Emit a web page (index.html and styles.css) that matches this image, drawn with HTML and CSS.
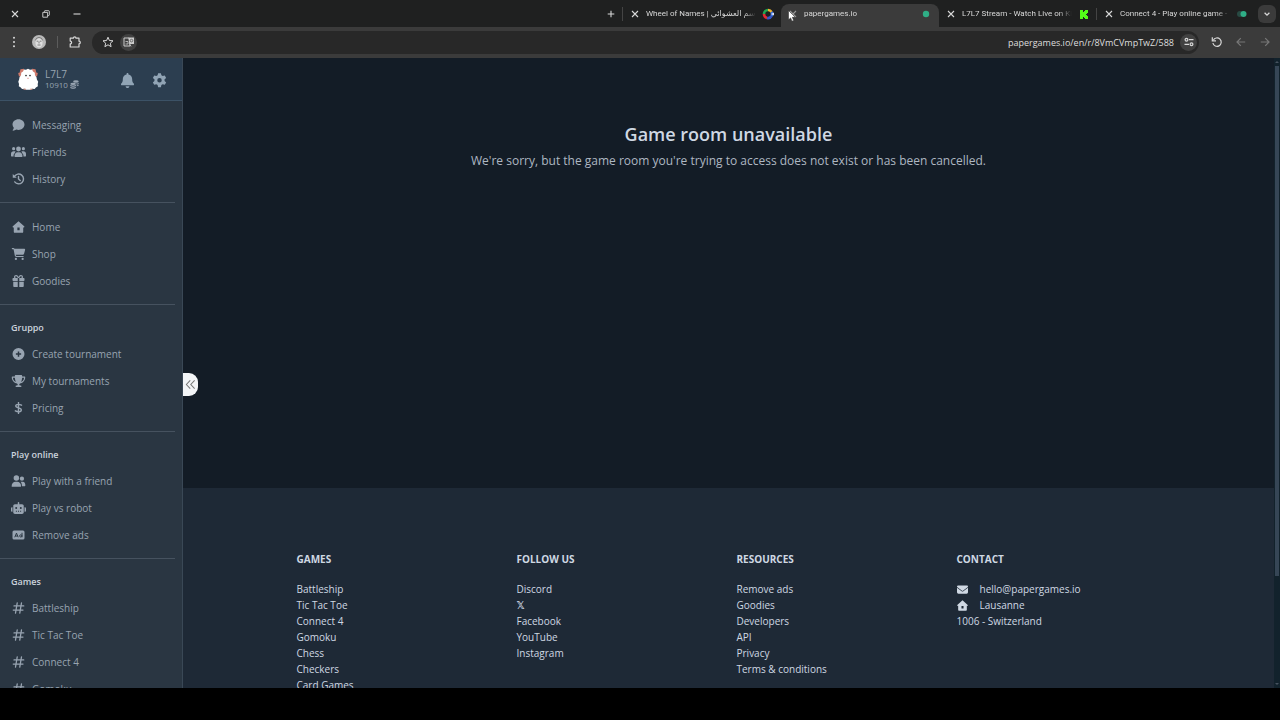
FILE: index.html
```html
<!DOCTYPE html>
<html lang="en">
<head>
  <meta charset="UTF-8">
  <title>papergames.io</title>
  <link rel="stylesheet" href="styles.css">
</head>
<body>

  <!-- icon set -->
  <svg class="sprite" aria-hidden="true">
    <symbol id="i-close" viewBox="0 0 8 8"><path d="M1 1l6 6M7 1L1 7" fill="none" stroke="currentColor" stroke-width="1.1"/></symbol>
    <symbol id="i-restore" viewBox="0 0 8 8"><path d="M.8 2.4h4.8v4.8H.8zM2.4 2.2V1.3q0-.6.6-.6h3.6q.7 0 .7.7v3.500q0 .6-.6.6H5.800" fill="none" stroke="currentColor" stroke-width=".9"/></symbol>
    <symbol id="i-min" viewBox="0 0 8 8"><path d="M.5 4h7" stroke="currentColor" stroke-width="1.1"/></symbol>
    <symbol id="i-plus" viewBox="0 0 8 8"><path d="M4 .7v6.600M.7 4h6.600" stroke="currentColor" stroke-width="1.100"/></symbol>
    <symbol id="i-chevron" viewBox="0 0 8 8"><path d="M1.600 2.800L4 5.200l2.400-2.400" fill="none" stroke="currentColor" stroke-width="1.300"/></symbol>
    <symbol id="i-dots" viewBox="0 0 12 12"><g fill="currentColor"><circle cx="6" cy="1.800" r="1"/><circle cx="6" cy="6" r="1"/><circle cx="6" cy="10.200" r="1"/></g></symbol>
    <symbol id="i-puzzle" viewBox="0 0 12 12"><path d="M1.200 2.200h3.200a1.300 1.300 0 0 1 2.600 0h3v3a1.300 1.300 0 0 1 0 2.600v3.200H1.200V7.900a1.400 1.400 0 0 0 0-2.800z" fill="none" stroke="currentColor" stroke-width="1.200" stroke-linejoin="round"/></symbol>
    <symbol id="i-star" viewBox="0 0 12 12"><path d="M6 1.200l1.400 3.300 3.600.3-2.700 2.400.8 3.500L6 8.800l-3.100 1.900.8-3.500L1 4.800l3.600-.3z" fill="none" stroke="currentColor" stroke-width="1" stroke-linejoin="round"/></symbol>
    <symbol id="i-tune" viewBox="0 0 12 12"><g fill="none" stroke="currentColor" stroke-width="1.200"><circle cx="3.500" cy="3.700" r="1.400"/><path d="M6 3.700h4.500M1.500 8.300H6"/><circle cx="8.500" cy="8.300" r="1.400"/></g></symbol>
    <symbol id="i-reload" viewBox="0 0 12 12"><path d="M2.300 4.200A4.200 4.200 0 1 1 1.900 7" fill="none" stroke="currentColor" stroke-width="1.200"/><path d="M1.300 1.200v3.700H5" fill="none" stroke="currentColor" stroke-width="1.200"/></symbol>
    <symbol id="i-left" viewBox="0 0 12 12"><path d="M10.200 6H2.200M5.800 2.200L2 6l3.800 3.800" fill="none" stroke="currentColor" stroke-width="1.200"/></symbol>
    <symbol id="i-right" viewBox="0 0 12 12"><path d="M1.800 6h8M6.200 2.200L10 6 6.200 9.800" fill="none" stroke="currentColor" stroke-width="1.200"/></symbol>

    <symbol id="i-bell" viewBox="0 0 448 512"><path fill="currentColor" d="M224 0c-18 0-32 14-32 32v19C119 66 64 130 64 208v19c0 47-17 92-48 127l-8 9c-8 9-10 23-5 34s16 19 29 19h384c13 0 24-7 29-19s3-25-5-34l-8-9c-31-35-48-80-48-127v-19c0-78-55-142-128-157V32c0-18-14-32-32-32zm45 493c12-12 19-28 19-45H160c0 17 7 33 19 45s28 19 45 19 33-7 45-19z"/></symbol>
    <symbol id="i-gear" viewBox="0 0 16 16"><path fill="currentColor" fill-rule="evenodd" d="M6.500.3h3l.5 2.200 1.400.8 2.200-.7 1.500 2.600L13.400 6.700v1.700l1.700 1.600-1.500 2.600-2.200-.7-1.400.9-.5 2.300h-3L6 12.800l-1.400-.9-2.200.7L.900 10l1.700-1.600V6.700L.900 5.200l1.500-2.600 2.200.7L6 2.500zM8 5.200a2.400 2.400 0 1 0 0 4.800 2.400 2.400 0 0 0 0-4.800z"/></symbol>
    <symbol id="i-coins" viewBox="0 0 16 16"><g fill="currentColor"><ellipse cx="10.500" cy="2.800" rx="5" ry="2.200"/><path d="M11 6.200c2 0 3.800-.5 4.500-1.500v1.800c-.6 1-2.300 1.500-4 1.600zM11.800 9.600c1.800-.2 3.200-.7 3.700-1.600v1.800c-.6.900-2 1.400-3.700 1.500z"/><ellipse cx="5.500" cy="7" rx="5" ry="2"/><path d="M.5 8.600c2 1.700 8 1.700 10 0v2c-2 1.600-8 1.600-10 0zM.5 12c2 1.700 8 1.700 10 0v1.600c-1 2.500-9 2.500-10 0z"/></g></symbol>
    <symbol id="i-comment" viewBox="0 0 16 16"><path fill="currentColor" d="M16 7.400c0 4-3.500 7.100-8 7.100-1 0-2-.1-2.900-.4-1.200.9-2.700 1.400-4.400 1.500-.5 0-.7-.5-.4-.9.800-.9 1.300-2 1.400-3.100A7 7 0 0 1 0 7.400C0 3.400 3.500.2 8 .2s8 3.200 8 7.200z"/></symbol>
    <symbol id="i-users" viewBox="0 0 640 512"><g fill="currentColor"><circle cx="112" cy="112" r="66"/><circle cx="528" cy="112" r="66"/><circle cx="320" cy="130" r="104"/><path d="M0 330c0-59 48-107 107-107h43c16 0 31 4 45 10-15 50-50 84-84 140v70H21c-12 0-21-9-21-21zM445 233c14-6 29-10 45-10h43c59 0 107 48 107 107v92c0 12-9 21-21 21h-90v-70c-34-56-69-90-84-140zM148 440c0-90 50-170 133-170h77c84 0 134 80 134 170 0 15-12 27-27 27H175c-15 0-27-12-27-27z"/></g></symbol>
    <symbol id="i-history" viewBox="0 0 16 16"><g fill="none" stroke="currentColor" stroke-width="1.900" stroke-linecap="round"><path d="M2.600 4.600A6.500 6.500 0 1 1 3 11.900"/><path d="M8 4.500V8l2.300 2.100"/></g><path fill="currentColor" d="M.3 1.200l5.400 5.200H.3z"/></symbol>
    <symbol id="i-house" viewBox="0 0 16 16"><path fill="currentColor" fill-rule="evenodd" d="M8 .2l7.600 6.900c.6.700.3 1.400-.5 1.400h-.8v5.700c0 1-.7 1.600-1.600 1.600H3.300c-.9 0-1.600-.6-1.600-1.600V8.500H.9c-.8 0-1.100-.7-.5-1.400zM6.500 8.800v3.400h3V8.800z"/></symbol>
    <symbol id="i-cart" viewBox="0 0 576 512"><path fill="currentColor" d="M0 24C0 11 11 0 24 0h46c21 0 40 13 49 32h411c27 0 46 25 39 51l-41 152c-9 31-37 53-69 53H171l5 29c3 11 12 19 24 19h288c13 0 24 11 24 24s-11 24-24 24H200c-35 0-64-25-71-59L77 54c0-3-3-6-7-6H24C11 48 0 37 0 24z"/><circle fill="currentColor" cx="176" cy="464" r="48"/><circle fill="currentColor" cx="464" cy="464" r="48"/></symbol>
    <symbol id="i-gift" viewBox="0 0 512 512"><path fill="currentColor" fill-rule="evenodd" d="M191 69l34 59h-73c-22 0-40-18-40-40s18-40 40-40h2c15 0 29 8 37 21zM64 88c0 14 4 28 10 40H32c-18 0-32 14-32 32v64c0 18 14 32 32 32h192V128h64v128h192c18 0 32-14 32-32v-64c0-18-14-32-32-32h-42c6-12 10-26 10-40 0-49-39-88-88-88h-2c-32 0-62 17-78 45l-24 41-24-41C216 17 186 0 154 0h-2c-49 0-88 39-88 88zm336 0c0 22-18 40-40 40h-73l34-59c8-13 22-21 37-21h2c22 0 40 18 40 40zM32 288v176c0 27 21 48 48 48h144V288zm256 224h144c27 0 48-21 48-48V288H288z"/></symbol>
    <symbol id="i-add" viewBox="0 0 16 16"><path fill="currentColor" fill-rule="evenodd" d="M8 0a8 8 0 1 0 0 16A8 8 0 0 0 8 0zM7 4.500h2V7h2.500v2H9v2.500H7V9H4.500V7H7z"/></symbol>
    <symbol id="i-trophy" viewBox="0 0 576 512"><path fill="currentColor" fill-rule="evenodd" d="M400 0H176c-27 0-48 22-47 48v16H24C11 64 0 75 0 88c0 93 33 157 79 201 44 44 99 66 140 78 24 7 37 27 37 47s-17 34-37 34h-27c-18 0-32 14-32 32s14 32 32 32h192c18 0 32-14 32-32s-14-32-32-32h-27c-20 0-37-14-37-34s13-40 37-47c41-12 96-34 140-78 46-44 79-108 79-201 0-13-11-24-24-24H447V48c1-26-20-48-47-48zM49 112h83c9 90 30 149 53 189-49-25-129-79-136-189zm478 0c-7 110-87 164-136 189 23-40 44-99 53-189z"/></symbol>
    <symbol id="i-dollar" viewBox="0 0 16 16"><path d="M8 .8v14.400M12 4.300C9.500 3 4.400 2.300 4.400 5.400c0 3.300 7.300 1.600 7.300 5.100 0 3.300-5 2.900-7.900 1.300" fill="none" stroke="currentColor" stroke-width="1.900" stroke-linecap="round"/></symbol>
    <symbol id="i-pair" viewBox="0 0 16 14"><g fill="currentColor"><circle cx="5.500" cy="3.500" r="3.200"/><path d="M0 13c0-3 2-5 4.500-5h2C9 8 11 10 11 13q0 .8-.8.8H.8Q0 13.800 0 13z"/><circle cx="12" cy="4.300" r="2.500"/><path d="M10.300 8H13c2 0 3 2 3 4 0 .7-.3 1-.8 1H12c0-2-.6-4-1.700-5z"/></g></symbol>
    <symbol id="i-robot" viewBox="0 0 640 512"><path fill="currentColor" fill-rule="evenodd" d="M320 0c18 0 32 14 32 32v64h120c40 0 72 32 72 72v272c0 40-32 72-72 72H168c-40 0-72-32-72-72V168c0-40 32-72 72-72h120V32c0-18 14-32 32-32zM208 376v36h44v-36zm90 0v36h44v-36zm90 0v36h44v-36zM264 256a42 42 0 1 0-84 0 42 42 0 1 0 84 0zm196 0a42 42 0 1 0-84 0 42 42 0 1 0 84 0zM48 224h16v192H48c-27 0-48-21-48-48v-96c0-27 21-48 48-48zm544 0c27 0 48 21 48 48v96c0 27-21 48-48 48h-16V224z"/></symbol>
    <symbol id="i-ad" viewBox="0 0 16 16"><rect y="2" width="16" height="12" rx="2" fill="currentColor"/><path d="M3 11l2.300-5.500L7.600 11M4 9.400h2.700M12.700 5v6" fill="none" stroke="#2a3642" stroke-width="1.300"/><circle cx="11" cy="9.200" r="1.500" fill="none" stroke="#2a3642" stroke-width="1.200"/></symbol>
    <symbol id="i-hash" viewBox="0 0 16 16"><path d="M6.300 1.300L4 14.700M12 1.300L9.700 14.700M2 5.200h13M1 10.800h13" fill="none" stroke="currentColor" stroke-width="1.700" stroke-linecap="round"/></symbol>
    <symbol id="i-mail" viewBox="0 0 16 12"><path fill="currentColor" d="M1.500 0h13C15.300 0 16 .7 16 1.500c0 .5-.2.900-.6 1.200L8.600 7.800a1 1 0 0 1-1.200 0L.6 2.700A1.500 1.500 0 0 1 1.500 0zM0 3.500l6.800 5.100c.7.500 1.700.5 2.400 0L16 3.500V10a2 2 0 0 1-2 2H2a2 2 0 0 1-2-2z"/></symbol>
    <symbol id="i-collapse" viewBox="0 0 12 12"><path d="M5.700 1.500L1.500 6l4.200 4.500M10.500 1.500L6.300 6l4.200 4.500" fill="none" stroke="currentColor" stroke-width="1.100"/></symbol>
  </svg>

  <header class="browser">
    <div class="tab-strip">
      <div class="window-buttons">
        <button type="button" aria-label="Close window"><svg><use href="#i-close"/></svg></button>
        <button type="button" aria-label="Restore"><svg><use href="#i-restore"/></svg></button>
        <button type="button" aria-label="Minimize"><svg><use href="#i-min"/></svg></button>
      </div>
      <button type="button" class="new-tab" aria-label="New tab"><svg><use href="#i-plus"/></svg></button>
      <div class="tab">
        <button type="button" aria-label="Close tab"><svg><use href="#i-close"/></svg></button>
        <span class="tab-title">Wheel of Names | الاسم العشوائي</span>
        <svg class="favicon" viewBox="0 0 12 12">
          <g fill="none" stroke-width="2.600">
            <path d="M6 2A4 4 0 0 1 9.500 4" stroke="#f2b632"/>
            <path d="M9.500 4A4 4 0 0 1 9.500 8" stroke="#4479e8"/>
            <path d="M9.500 8A4 4 0 0 1 5 9.900" stroke="#3457c9"/>
            <path d="M5 9.900A4 4 0 0 1 2 6" stroke="#e32b35"/>
            <path d="M2 6A4 4 0 0 1 6 2" stroke="#22a850"/>
          </g>
          <path d="M9 6l3-1.500v3z" fill="#dfe6f5"/>
        </svg>
      </div>
      <div class="tab active">
        <button type="button" aria-label="Close tab"><svg><use href="#i-close"/></svg></button>
        <span class="tab-title">papergames.io</span>
        <svg class="favicon" viewBox="0 0 12 12"><circle cx="6" cy="6" r="3.200" fill="#2fae86"/></svg>
        <svg class="cursor" viewBox="0 0 8 12"><path d="M.5.5v9.300l2.100-1.900 1.400 3.300 1.700-.8-1.400-3.100h3z" fill="#fff" stroke="#222" stroke-width=".5"/></svg>
      </div>
      <div class="tab">
        <button type="button" aria-label="Close tab"><svg><use href="#i-close"/></svg></button>
        <span class="tab-title">L7L7 Stream - Watch Live on Kick</span>
        <svg class="favicon" viewBox="0 0 12 12"><path d="M2 2h3v2h1V3h1V2h3v3H9v1H8v1h1v1h1v3H7v-1H6V9H5v2H2z" fill="#53fc18"/></svg>
      </div>
      <div class="tab">
        <button type="button" aria-label="Close tab"><svg><use href="#i-close"/></svg></button>
        <span class="tab-title">Connect 4 - Play online game -</span>
        <svg class="favicon" viewBox="0 0 12 12"><circle cx="4" cy="6" r="3" fill="#284a43"/><circle cx="7.500" cy="6" r="3" fill="#2fae86"/></svg>
      </div>
      <button type="button" class="tab-search" aria-label="Search tabs"><svg><use href="#i-chevron"/></svg></button>
    </div>

    <div class="toolbar">
      <button type="button" aria-label="Menu"><svg><use href="#i-dots"/></svg></button>
      <button type="button" class="profile" aria-label="Profile">
        <svg viewBox="0 0 14 14"><circle cx="7" cy="7" r="7" fill="#b9b9b9"/><path d="M3.500 5Q7 1 10.500 5v4q-1 3.500-3.500 3.500T3.500 9z" fill="#dedede"/><path d="M3.300 5.500Q4 2.500 7 2.500t3.700 3M4.600 6.200h1.700M7.800 6.200h1.700M7 6.500v2M5.500 10h3" fill="none" stroke="#666" stroke-width=".8"/></svg>
      </button>
      <span class="divider"></span>
      <button type="button" class="extensions" aria-label="Extensions"><svg><use href="#i-puzzle"/></svg></button>
      <div class="address-bar">
        <button type="button" aria-label="Bookmark"><svg><use href="#i-star"/></svg></button>
        <button type="button" class="round translate" aria-label="Translate">
          <svg viewBox="0 0 12 12"><path d="M1 2h5l1 8H1z" fill="none" stroke="#ccc"/><path d="M5.500 1.500h5.500V8H6.500z" fill="#ccc"/><path d="M2.500 5.500h2.500v2.500H2.500M8 10.500l-1-2" fill="none" stroke="#ccc" stroke-width=".8"/><circle cx="8.500" cy="4.600" r="1.300" fill="none" stroke="#555" stroke-width=".8"/></svg>
        </button>
        <input type="text" class="url" aria-label="Address" value="papergames.io/en/r/8VmCVmpTwZ/588">
        <button type="button" class="round" aria-label="Site settings"><svg><use href="#i-tune"/></svg></button>
      </div>
      <div class="history-buttons">
        <button type="button" aria-label="Reload"><svg><use href="#i-reload"/></svg></button>
        <button type="button" aria-label="Forward" disabled><svg><use href="#i-left"/></svg></button>
        <button type="button" aria-label="Back" disabled><svg><use href="#i-right"/></svg></button>
      </div>
    </div>
  </header>

  <div class="app">
    <aside class="sidebar">
      <div class="user-bar">
        <svg class="avatar" viewBox="0 0 22 22">
          <path d="M3.500 1.300l3.500-.5v4l-5 2zM18.500 1.300L15 .8v4l5 2zM1.200 5l3-1v4L2 8.500zM20.800 5l-3-1v4l2.200.5z" fill="#cf7a6b"/>
          <path d="M11 .7l2 1 2-.2 1 2.100 1.800 1.200.2 2.400 1.500 2 .4 2.300 1.300 2.200-.5 2.200.2 2.300-2 1.300-1.200 1.600-2.700-.3-1.500.9H9.200l-1.500-.9-2.700.3-1.200-1.600-2-1.300.2-2.300-.7-2.200L2.100 11.500l.4-2.300L4 7.200l.2-2.400L6 3.600l1-2.100 2 .2z" fill="#fff"/>
          <path d="M6.500 21.200h2.500M13 21.200h2.500" stroke="#e2a08f"/>
          <circle cx="9" cy="7.600" r=".8" fill="#222"/><circle cx="13" cy="7.600" r=".8" fill="#222"/><path d="M10.300 10.300h1.400" stroke="#d77" stroke-width=".8"/>
        </svg>
        <div class="user">
          <div class="user-name">L7L7</div>
          <div class="user-coins">10910 <svg><use href="#i-coins"/></svg></div>
        </div>
        <button type="button" aria-label="Notifications"><svg><use href="#i-bell"/></svg></button>
        <button type="button" aria-label="Settings"><svg><use href="#i-gear"/></svg></button>
      </div>

      <nav class="menu">
        <section>
          <a href="#"><svg><use href="#i-comment"/></svg>Messaging</a>
          <a href="#"><svg><use href="#i-users"/></svg>Friends</a>
          <a href="#"><svg><use href="#i-history"/></svg>History</a>
        </section>
        <section>
          <a href="#"><svg><use href="#i-house"/></svg>Home</a>
          <a href="#"><svg><use href="#i-cart"/></svg>Shop</a>
          <a href="#"><svg><use href="#i-gift"/></svg>Goodies</a>
        </section>
        <section>
          <h3>Gruppo</h3>
          <a href="#"><svg><use href="#i-add"/></svg>Create tournament</a>
          <a href="#"><svg><use href="#i-trophy"/></svg>My tournaments</a>
          <a href="#"><svg><use href="#i-dollar"/></svg>Pricing</a>
        </section>
        <section>
          <h3>Play online</h3>
          <a href="#"><svg><use href="#i-pair"/></svg>Play with a friend</a>
          <a href="#"><svg><use href="#i-robot"/></svg>Play vs robot</a>
          <a href="#"><svg><use href="#i-ad"/></svg>Remove ads</a>
        </section>
        <section>
          <h3>Games</h3>
          <a href="#"><svg><use href="#i-hash"/></svg>Battleship</a>
          <a href="#"><svg><use href="#i-hash"/></svg>Tic Tac Toe</a>
          <a href="#"><svg><use href="#i-hash"/></svg>Connect 4</a>
          <a href="#"><svg><use href="#i-hash"/></svg>Gomoku</a>
        </section>
      </nav>
    </aside>

    <div class="page">
      <button type="button" class="collapse" aria-label="Collapse menu"><svg><use href="#i-collapse"/></svg></button>
      <main class="room">
        <h1>Game room unavailable</h1>
        <p>We're sorry, but the game room you're trying to access does not exist or has been cancelled.</p>
      </main>

      <footer class="site-footer">
        <div class="container">
          <div class="col">
            <h2>GAMES</h2>
            <ul>
              <li><a href="#">Battleship</a></li>
              <li><a href="#">Tic Tac Toe</a></li>
              <li><a href="#">Connect 4</a></li>
              <li><a href="#">Gomoku</a></li>
              <li><a href="#">Chess</a></li>
              <li><a href="#">Checkers</a></li>
              <li><a href="#">Card Games</a></li>
            </ul>
          </div>
          <div class="col">
            <h2>FOLLOW US</h2>
            <ul>
              <li><a href="#">Discord</a></li>
              <li><a href="#"><b>𝕏</b></a></li>
              <li><a href="#">Facebook</a></li>
              <li><a href="#">YouTube</a></li>
              <li><a href="#">Instagram</a></li>
            </ul>
          </div>
          <div class="col">
            <h2>RESOURCES</h2>
            <ul>
              <li><a href="#">Remove ads</a></li>
              <li><a href="#">Goodies</a></li>
              <li><a href="#">Developers</a></li>
              <li><a href="#">API</a></li>
              <li><a href="#">Privacy</a></li>
              <li><a href="#">Terms &amp; conditions</a></li>
            </ul>
          </div>
          <div class="col">
            <h2>CONTACT</h2>
            <ul class="contact">
              <li><svg><use href="#i-mail"/></svg><a href="#">hello@papergames.io</a></li>
              <li><svg><use href="#i-house"/></svg>Lausanne</li>
              <li>1006 - Switzerland</li>
            </ul>
          </div>
        </div>
      </footer>
    </div>

    <div class="scrollbar">
      <span class="arrow up"></span>
      <div class="track"><div class="thumb"></div></div>
      <span class="arrow down"></span>
    </div>
  </div>

</body>
</html>
```
FILE: styles.css
```css
* {
  box-sizing: border-box;
}

body {
  margin: 0;
  height: 100vh;
  padding-bottom: 32px;
  display: flex;
  flex-direction: column;
  overflow: hidden;
  background: #000;
  color: #cfd8e3;
  font-family: "Open Sans", "Noto Sans", "DejaVu Sans", sans-serif;
  font-size: 10px;
}

h1, h2, h3, p, ul {
  margin: 0;
  padding: 0;
}

ul {
  list-style: none;
}

a {
  color: inherit;
  text-decoration: none;
}

button {
  display: flex;
  align-items: center;
  justify-content: center;
  flex: none;
  margin: 0;
  padding: 0;
  border: none;
  background: none;
  color: inherit;
  cursor: pointer;
}

svg {
  display: block;
  flex: none;
}

.sprite {
  position: absolute;
  width: 0;
  height: 0;
}

/* browser */
.browser {
  flex: none;
  background: #3b3b3b;
  color: #d8d8d8;
}

.tab-strip {
  display: flex;
  align-items: center;
  height: 27px;
  padding-right: 4px;
  background: #1f2020;
}

.tab-strip button svg {
  width: 8px;
  height: 8px;
}

.window-buttons {
  display: flex;
  gap: 2px;
  margin-right: auto;
}

.window-buttons button {
  width: 29px;
  height: 27px;
}

.new-tab {
  width: 24px;
  height: 14px;
  border-right: 1px solid #444;
}

.tab {
  position: relative;
  display: flex;
  align-items: center;
  flex: 0 1 158px;
  min-width: 0;
  height: 27px;
  padding: 0 7px 0 8px;
  font-family: Roboto, "DejaVu Sans", sans-serif;
  font-size: 8px;
}

.tab-title {
  flex: 1;
  min-width: 0;
  margin: 0 6px 0 7px;
  overflow: hidden;
  white-space: nowrap;
  mask-image: linear-gradient(to right, #000 88%, transparent);
}

.favicon {
  width: 12px;
  height: 12px;
}

.tab.active {
  height: 23px;
  align-self: flex-end;
  padding-bottom: 4px;
  border-radius: 8px 8px 0 0;
  background: #3b3b3b;
}

.tab.active button {
  color: #999;
}

.tab.active + .tab::after {
  content: "";
  width: 1px;
  height: 12px;
  position: absolute;
  right: 0;
  background: #444;
}

.cursor {
  position: absolute;
  left: 7px;
  top: 6px;
  width: 8px;
  height: 12px;
}

.tab-search {
  width: 18px;
  height: 18px;
  margin-left: 3px;
  border-radius: 6px;
  background: #3b3b3b;
}

.toolbar {
  display: flex;
  align-items: center;
  height: 31px;
  padding: 0 9px 1px 8px;
}

.toolbar svg {
  width: 12px;
  height: 12px;
}

.toolbar .profile {
  margin: 0 11px 0 12px;
}

.toolbar .profile svg {
  width: 14px;
  height: 14px;
}

.divider {
  width: 1px;
  height: 12px;
  background: #5c5c5c;
}

.extensions {
  margin: 0 11px;
}

.address-bar {
  display: flex;
  align-items: center;
  flex: 1;
  height: 23px;
  padding: 0 2px 0 10px;
  border-radius: 12px;
  background: #282828;
}

.round {
  width: 17px;
  height: 17px;
  border-radius: 50%;
  background: #414141;
}

.translate {
  margin-left: 6px;
}

.url {
  flex: 1;
  min-width: 0;
  padding: 0 6px;
  border: none;
  outline: none;
  background: none;
  color: #dedede;
  font: inherit;
  font-size: 9px;
  text-align: right;
}

.history-buttons {
  display: flex;
  gap: 12px;
  margin-left: 12px;
}

.history-buttons button:disabled {
  color: #777;
}

/* layout */
.app {
  display: flex;
  flex: 1;
  min-height: 0;
  overflow: hidden;
}

.sidebar {
  flex: none;
  width: 183px;
  overflow: hidden;
  border-right: 1px solid #3a4856;
  background: #2a3642;
  color: #98a4b1;
}

.user-bar {
  display: flex;
  align-items: center;
  height: 43px;
  padding: 0 15px 0 17px;
  border-bottom: 1px solid #3c5266;
  background: #2c3e50;
}

.avatar {
  width: 22px;
  height: 22px;
}

.user {
  flex: 1;
  margin-left: 6px;
}

.user-name {
  line-height: 11px;
}

.user-coins {
  display: flex;
  align-items: center;
  gap: 2px;
  font-size: 8px;
  line-height: 10px;
}

.user-coins svg {
  width: 9px;
  height: 9px;
}

.user-bar button {
  margin-left: 17px;
  padding-top: 2px;
  color: #91a4b5;
}

.user-bar button svg {
  width: 15px;
  height: 15px;
}

.menu section {
  margin-right: 7px;
  padding: 10px 0;
  border-bottom: 1px solid #46525f;
}

.menu h3 {
  padding-left: 11px;
  color: #cbd3dc;
  font-size: 9px;
  font-weight: 600;
  line-height: 25px;
}

.menu a {
  display: flex;
  align-items: center;
  height: 27px;
  padding-left: 11px;
}

.menu a svg {
  width: 15px;
  height: 12px;
  margin-right: 6px;
}

.page {
  position: relative;
  flex: 1;
  min-width: 0;
  background: #131c26;
}

.collapse {
  position: absolute;
  left: 0;
  top: 315px;
  width: 15px;
  height: 23px;
  border-radius: 0 9px 9px 0;
  background: #f3f5f7;
  color: #777;
}

.collapse svg {
  width: 11px;
  height: 11px;
}

.room {
  min-height: 430px;
  padding: 62px 16px 0;
  text-align: center;
}

.room h1 {
  font-size: 18px;
  font-weight: 600;
  line-height: 28px;
}

.room p {
  color: #aeb7c2;
  font-size: 12px;
  line-height: 26px;
}

.site-footer {
  padding: 60px 16px;
  background: #1e2936;
}

.container {
  display: grid;
  grid-template-columns: repeat(4, 1fr);
  max-width: 880px;
  margin: 0 auto;
}

.col {
  padding: 0 8px;
  line-height: 16px;
}

.col h2 {
  margin-bottom: 11px;
  font-size: 10px;
  font-weight: 700;
  line-height: 22px;
}

.contact li {
  display: flex;
  align-items: center;
}

.contact svg {
  width: 11px;
  height: 11px;
  margin-right: 12px;
}

.scrollbar {
  display: flex;
  flex-direction: column;
  align-items: center;
  flex: none;
  width: 6px;
  background: #12222c;
}

.track {
  flex: 1;
  width: 4px;
}

.thumb {
  height: 83%;
  background: #364656;
}

.arrow {
  margin: 3px 0;
  border: 2px solid transparent;
}

.arrow.up {
  border-top: none;
  border-bottom-color: #46525f;
}

.arrow.down {
  border-bottom: none;
  border-top-color: #46525f;
}
```
